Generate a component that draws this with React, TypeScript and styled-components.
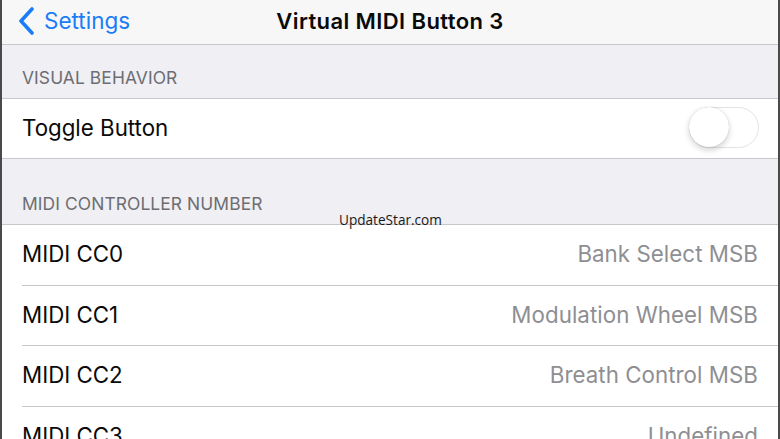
import React from "react";
import styled, { createGlobalStyle } from "styled-components";

const Global = createGlobalStyle`
  html, body { margin: 0; padding: 0; background: #efeff4; }
  body { font-family: "Inter", "Liberation Sans", sans-serif; -webkit-font-smoothing: antialiased; }
`;

const Screen = styled.div`
  width: 780px;
  height: 439px;
  box-sizing: border-box;
  overflow: hidden;
  background: #efeff4;
  border-left: 2px solid #4a4a4a;
  border-right: 2px solid #4a4a4a;
  position: relative;
  display: flex;
  flex-direction: column;
`;

const NavBar = styled.div`
  height: 44px;
  flex-shrink: 0;
  box-sizing: content-box;
  background: #f7f7f8;
  border-bottom: 1px solid #c8c7cc;
  display: grid;
  grid-template-columns: 1fr auto 1fr;
  align-items: center;
  padding-bottom: 0;
  & > * { margin-top: -3px; }
`;

const Back = styled.div`
  display: flex;
  align-items: center;
  gap: 9px;
  padding-left: 15px;
  color: #1a7cf6;
  font-size: 22.5px;
  letter-spacing: 0;
`;

const Title = styled.div`
  font-size: 22px;
  font-weight: 600;
  color: #0a0a0a;
  letter-spacing: 0.4px;
`;

const SectionHeader = styled.div<{ $h: number }>`
  height: ${(p) => p.$h}px;
  flex-shrink: 0;
  display: flex;
  align-items: flex-end;
  box-sizing: border-box;
  padding: 0 0 10px 20px;
  font-size: 17.4px;
  color: #6d6d72;
  letter-spacing: 0.1px;
  border-bottom: 1px solid #c8c7cc;
`;

const Group = styled.div`
  background: #fff;
  flex-shrink: 0;
`;

const Row = styled.div<{ $h: number; $inset: boolean }>`
  height: ${(p) => p.$h}px;
  box-sizing: border-box;
  display: flex;
  align-items: center;
  justify-content: space-between;
  padding: 0 20px 3px 20px;
  position: relative;
  &::after {
    content: "";
    position: absolute;
    left: ${(p) => (p.$inset ? 20 : 0)}px;
    right: 0;
    bottom: 0;
    height: 1px;
    background: #c8c7cc;
  }
`;

const Label = styled.span`
  font-size: 22.3px;
  color: #0a0a0a;
  letter-spacing: 0;
`;

const Detail = styled.span`
  font-size: 22.3px;
  color: #8e8e93;
  letter-spacing: 0.05px;
`;

const Switch = styled.div`
  width: 70px;
  height: 41px;
  border-radius: 21px;
  border: 1.5px solid #e3e3e6;
  background: #fff;
  box-sizing: border-box;
  position: relative;
  margin-right: -1px;
`;

const Knob = styled.div`
  position: absolute;
  left: -1px;
  top: -1px;
  width: 40px;
  height: 40px;
  border-radius: 50%;
  background: #fff;
  box-shadow: 0 3px 6px rgba(0, 0, 0, 0.18), 0 0 1px rgba(0, 0, 0, 0.25);
`;

const Watermark = styled.div`
  position: absolute;
  left: 337px;
  top: 210px;
  font-family: "Open Sans", "Liberation Sans", sans-serif;
  font-size: 13.6px;
  color: #1a1a1a;
`;

const Chevron = () => (
  <svg width="18" height="28" viewBox="0 0 18 28">
    <path d="M15 2 L4 14 L15 26" fill="none" stroke="#1a7cf6" strokeWidth="3.6" strokeLinecap="round" strokeLinejoin="round" />
  </svg>
);

const cc = [
  ["MIDI CC0", "Bank Select MSB"],
  ["MIDI CC1", "Modulation Wheel MSB"],
  ["MIDI CC2", "Breath Control MSB"],
  ["MIDI CC3", "Undefined"],
];

export default function App() {
  return (
    <>
      <Global />
      <Screen>
        <NavBar>
          <Back>
            <Chevron />
            <span>Settings</span>
          </Back>
          <Title>Virtual MIDI Button 3</Title>
          <div />
        </NavBar>
        <SectionHeader $h={54}>VISUAL BEHAVIOR</SectionHeader>
        <Group>
          <Row $h={60} $inset={false}>
            <Label>Toggle Button</Label>
            <Switch>
              <Knob />
            </Switch>
          </Row>
        </Group>
        <SectionHeader $h={66}>MIDI CONTROLLER NUMBER</SectionHeader>
        <Group>
          {cc.map(([l, d]) => (
            <Row key={l} $h={60.5} $inset={true}>
              <Label>{l}</Label>
              <Detail>{d}</Detail>
            </Row>
          ))}
        </Group>
        <Watermark>UpdateStar.com</Watermark>
      </Screen>
    </>
  );
}
